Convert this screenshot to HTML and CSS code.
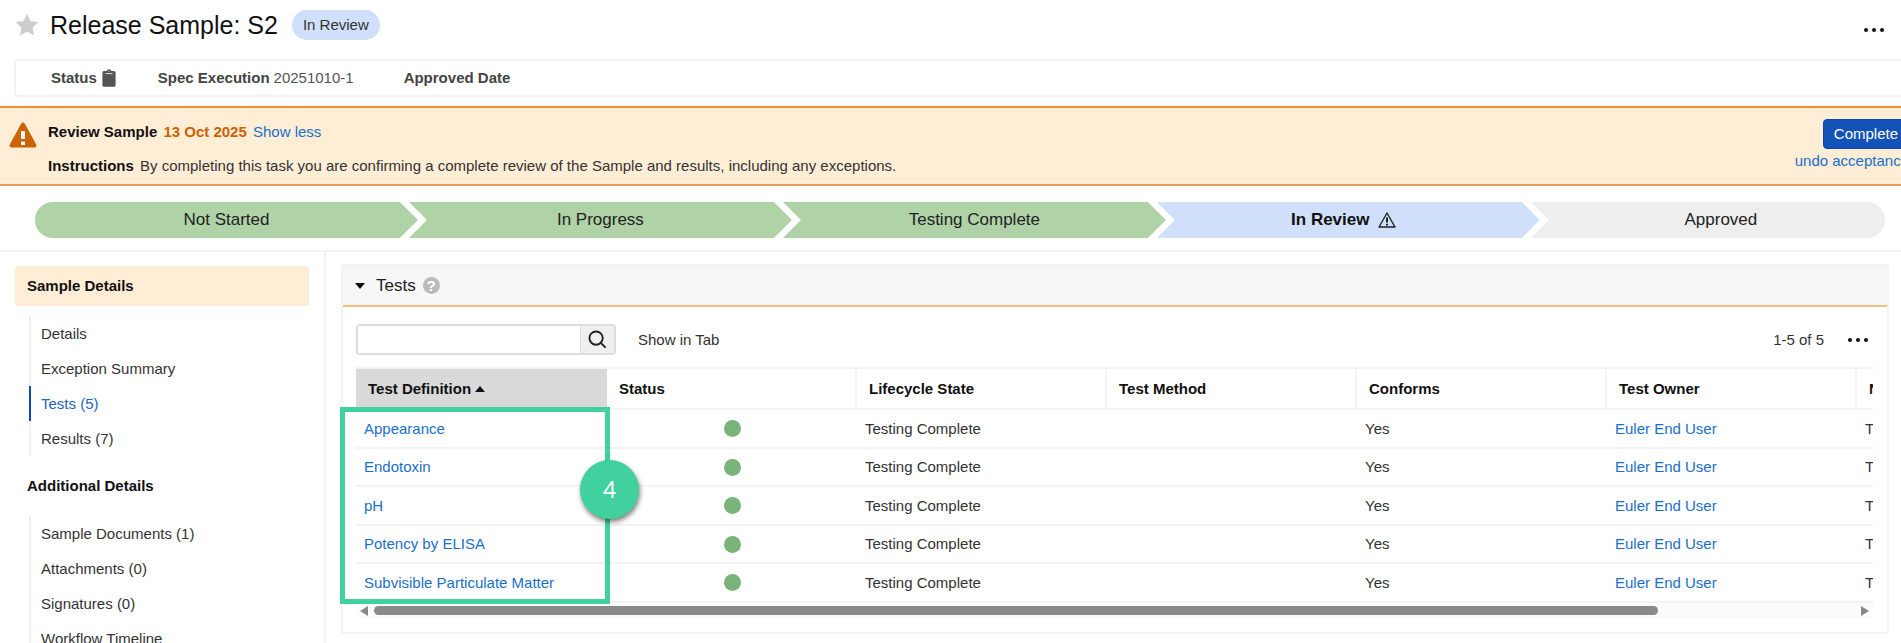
FILE: index.html
```html
<!DOCTYPE html>
<html lang="en">
	<head>
		<meta charset="utf-8">
		<title>Release Sample: S2</title>
		<link rel="stylesheet" href="styles.css">
	</head>
	<body>
		<header class="page-head">
			<svg class="star" viewBox="0 0 24 24"><path d="M12 .8l3.4 7.4 8 .9-5.900 5.500 1.600 8L12 18.600l-7.100 4 1.600-8L.6 9.100l8-.9z"/></svg>
			<h1>Release Sample: S2</h1>
			<span class="badge">In Review</span>
			<button class="more" aria-label="More actions"><i></i><i></i><i></i></button>
		</header>

		<div class="summary">
			<span class="field"><b>Status</b>
				<svg class="clip" viewBox="0 0 14 18"><path d="M2 2h2.600a2.500 2.500 0 0 1 4.800 0H12a1.600 1.600 0 0 1 1.600 1.600v12.600a1.600 1.600 0 0 1-1.600 1.600H2A1.600 1.600 0 0 1 .4 16.200V3.600A1.600 1.600 0 0 1 2 2z"/><path class="clip-bar" d="M3.400 4.600h7.200M7 1.800v.9"/></svg>
			</span>
			<span class="field"><b>Spec Execution</b> 20251010-1</span>
			<span class="field"><b>Approved Date</b></span>
		</div>

		<section class="banner">
			<svg class="warn" viewBox="0 0 28 26"><path d="M12.300 1.500a2 2 0 0 1 3.400 0l11.500 21a2 2 0 0 1-1.700 3H2.500a2 2 0 0 1-1.700-3z"/><path class="mark" d="M14 9v8M14 19.500v3.500"/></svg>
			<div class="task">
				<p><b>Review Sample</b> <b class="due">13 Oct 2025</b> <a href="#">Show less</a></p>
				<p><b>Instructions</b> <span>By completing this task you are confirming a complete review of the Sample and results, including any exceptions.</span></p>
			</div>
			<div class="task-actions">
				<button class="complete">Complete</button>
				<a href="#">undo acceptance</a>
			</div>
		</section>

		<ol class="stages">
			<li class="done">Not Started</li>
			<li class="done">In Progress</li>
			<li class="done">Testing Complete</li>
			<li class="current">In Review
				<svg class="alert" viewBox="0 0 18 16"><path d="M9 1L17 15H1z"/><path class="alert-mark" d="M9 5.500v5M9 11.700v1.800"/></svg>
			</li>
			<li>Approved</li>
		</ol>

		<div class="content">
			<nav class="side">
				<h2 class="active">Sample Details</h2>
				<ul>
					<li><a href="#">Details</a></li>
					<li><a href="#">Exception Summary</a></li>
					<li><a href="#" class="on">Tests (5)</a></li>
					<li><a href="#">Results (7)</a></li>
				</ul>
				<h2>Additional Details</h2>
				<ul>
					<li><a href="#">Sample Documents (1)</a></li>
					<li><a href="#">Attachments (0)</a></li>
					<li><a href="#">Signatures (0)</a></li>
					<li><a href="#">Workflow Timeline</a></li>
				</ul>
			</nav>

			<main>
				<section class="panel">
					<h2 class="panel-head"><span class="caret down"></span>Tests <span class="help">?</span></h2>
					<div class="panel-body">
						<div class="toolbar">
							<form class="search">
								<input type="text" aria-label="Search tests">
								<button type="button" aria-label="Search">
									<svg viewBox="0 0 20 20"><circle cx="8.500" cy="8.500" r="7"/><path d="M13.500 13.500l5 5"/></svg>
								</button>
							</form>
							<a href="#" class="tab-link">Show in Tab</a>
							<span class="count">1-5 of 5</span>
							<button class="more" aria-label="Table actions"><i></i><i></i><i></i></button>
						</div>

						<div class="grid">
							<div class="scroller">
								<table>
									<thead>
										<tr><th class="sorted">Test Definition <span class="caret up"></span></th><th>Status</th><th>Lifecycle State</th><th>Test Method</th><th>Conforms</th><th>Test Owner</th><th>Name</th></tr>
									</thead>
									<tbody>
										<tr><td><a href="#">Appearance</a></td><td><span class="dot"></span></td><td>Testing Complete</td><td></td><td>Yes</td><td><a href="#">Euler End User</a></td><td>T</td></tr>
										<tr><td><a href="#">Endotoxin</a></td><td><span class="dot"></span></td><td>Testing Complete</td><td></td><td>Yes</td><td><a href="#">Euler End User</a></td><td>T</td></tr>
										<tr><td><a href="#">pH</a></td><td><span class="dot"></span></td><td>Testing Complete</td><td></td><td>Yes</td><td><a href="#">Euler End User</a></td><td>T</td></tr>
										<tr><td><a href="#">Potency by ELISA</a></td><td><span class="dot"></span></td><td>Testing Complete</td><td></td><td>Yes</td><td><a href="#">Euler End User</a></td><td>T</td></tr>
										<tr><td><a href="#">Subvisible Particulate Matter</a></td><td><span class="dot"></span></td><td>Testing Complete</td><td></td><td>Yes</td><td><a href="#">Euler End User</a></td><td>T</td></tr>
									</tbody>
								</table>
							</div>
							<div class="scrollbar">
								<svg class="arrow" viewBox="0 0 8 10"><path d="M8 0v10L0 5z"/></svg>
								<div class="track"><div class="thumb"></div></div>
								<svg class="arrow" viewBox="0 0 8 10"><path d="M0 0v10l8-5z"/></svg>
							</div>
							<div class="callout"><span class="step">4</span></div>
						</div>
					</div>
				</section>
			</main>
		</div>
	</body>
</html>
```
FILE: styles.css
```css
*{
	box-sizing: border-box;
}
body{
	margin: 0;
	height: 100vh;
	overflow: hidden;
	background: #fff;
	color: #333;
	font: 15px/20px "Liberation Sans", Arial, sans-serif;
}
h1,h2,p,ul,ol{
	margin: 0;
	padding: 0;
}
ul,ol{
	list-style: none;
}
a{
	color: #1a6fcc;
	text-decoration: none;
}
button{
	font: inherit;
	cursor: pointer;
}

/* title row */
.page-head{
	display: flex;
	align-items: center;
	height: 59px;
	padding: 0 14px 10px 15px;
}
.star{
	width: 24px;
	height: 24px;
	margin-right: 11px;
	fill: #ccc;
}
h1{
	color: #111;
	font-size: 25px;
	font-weight: normal;
	line-height: 30px;
}
.badge{
	margin-left: 14px;
	padding: 5px 11px;
	border-radius: 15px;
	background: #d0e0fa;
}
.more{
	display: flex;
	gap: 4px;
	margin-left: auto;
	padding: 3px;
	border: 0;
	background: none;
}
.more i{
	width: 4px;
	height: 4px;
	border-radius: 50%;
	background: #111;
}
.page-head .more{
	padding-top: 13px;
}

.summary{
	display: flex;
	align-items: center;
	height: 38px;
	margin-left: 14px;
	padding-left: 35px;
	border: 2px solid #f3f3f3;
	border-right: 0;
	border-radius: 4px 0 0 4px;
	color: #555;
}
.summary b{
	color: #444;
}
.field{
	display: flex;
	align-items: center;
	gap: 4px;
	margin-right: 50px;
}
.field:first-child{
	gap: 5px;
	margin-right: 42px;
}
.clip{
	width: 14px;
	height: 18px;
	fill: #555;
}
.clip-bar{
	fill: none;
	stroke: #ddd;
}

/* task banner */
.banner{
	display: flex;
	height: 80px;
	margin-top: 9px;
	padding: 11px 0 0 9px;
	border-top: 2px solid #f0902c;
	border-bottom: 2px solid #e5a05e;
	background: #ffeed5;
}
.warn{
	width: 28px;
	height: 26px;
	margin: 3px 11px 0 0;
	fill: #cc6200;
}
.mark{
	stroke: #fff;
	stroke-width: 4;
}
.task{
	flex: 1;
	padding-top: 3px;
}
.task p{
	margin-bottom: 14px;
}
.task b{
	margin-right: 2px;
	color: #111;
}
.task .due{
	color: #cc6200;
}
.task-actions{
	display: flex;
	flex-direction: column;
	align-items: flex-end;
	gap: 2px;
	margin-right: -8px;
}
.complete{
	height: 30px;
	padding: 0 10px;
	border: 1px solid #0c47a8;
	border-radius: 4px;
	background: #1352b8;
	color: #fff;
}

/* lifecycle stages */
.stages{
	display: flex;
	margin: 16px 16px 12px 35px;
	font-size: 17px;
}
.stages li{
	display: flex;
	align-items: center;
	justify-content: center;
	gap: 9px;
	width: 20.7%;
	height: 36px;
	margin-right: -9px;
	background: #eee;
	color: #222;
	clip-path: polygon(0 0, calc(100% - 18px) 0, 100% 50%, calc(100% - 18px) 100%, 0 100%, 18px 50%);
}
.stages li:first-child{
	border-radius: 18px 0 0 18px;
	clip-path: polygon(0 0, calc(100% - 18px) 0, 100% 50%, calc(100% - 18px) 100%, 0 100%);
}
.stages li:last-child{
	flex: 1;
	margin-right: 0;
	padding-left: 26px;
	border-radius: 0 18px 18px 0;
	clip-path: polygon(0 0, 100% 0, 100% 100%, 0 100%, 18px 50%);
}
.stages .done{
	background: #b0d2a7;
}
.stages .current{
	padding-right: 9px;
	background: #d0e0fa;
	color: #111;
	font-weight: bold;
}
.alert{
	width: 18px;
	height: 16px;
	fill: none;
	stroke: #222;
	stroke-width: 1.4;
	stroke-linejoin: round;
}
.alert-mark{
	stroke-width: 2;
}

/* side navigation */
.content{
	display: flex;
	border-top: 2px solid #f3f3f3;
}
.side{
	width: 326px;
	padding: 14px 15px 0;
	border-right: 2px solid #f3f3f3;
}
.side h2{
	margin-bottom: 10px;
	padding: 10px 12px;
	border-radius: 3px;
	color: #111;
	font-size: 15px;
	line-height: 20px;
}
.side .active{
	background: #ffeed5;
}
.side ul{
	margin: 0 0 10px 14px;
}
.side li a{
	display: block;
	padding: 8px 10px 7px;
	border-left: 2px solid #eee;
	color: #333;
}
.side li .on{
	border-color: #0f4bb8;
	color: #2364c4;
}

/* tests panel */
main{
	flex: 1;
	min-width: 0;
	padding: 12px 12px 0 15px;
}
.panel{
	border: 2px solid #f3f3f3;
	border-radius: 3px;
}
.panel-head{
	display: flex;
	align-items: center;
	height: 41px;
	padding-left: 12px;
	border-bottom: 2px solid #f8bc7a;
	background: #f7f7f7;
	color: #222;
	font-size: 17px;
	font-weight: normal;
}
.caret{
	border: 5px solid transparent;
}
.down{
	margin: 6px 11px 0 0;
	border-top: 6px solid #111;
}
.help{
	width: 17px;
	height: 17px;
	margin-left: 7px;
	border-radius: 50%;
	background: #bbb;
	color: #fff;
	font-size: 15px;
	font-weight: bold;
	line-height: 17px;
	text-align: center;
}
.panel-body{
	padding: 17px 14px 14px 13px;
}
.toolbar{
	display: flex;
	align-items: center;
	margin-bottom: 12px;
}
.search{
	display: flex;
	width: 260px;
	height: 31px;
	border: 2px solid #ddd;
	border-radius: 4px;
}
.search input{
	flex: 1;
	min-width: 0;
	border: 0;
	font: inherit;
}
.search button{
	width: 34px;
	padding: 4px 7px;
	border: 0;
	border-left: 1px solid #ddd;
	background: #efefef;
}
.search svg{
	display: block;
	width: 19px;
	height: 19px;
	fill: none;
	stroke: #222;
	stroke-width: 2;
}
.tab-link{
	margin-left: 22px;
	color: #333;
}
.count{
	margin-left: auto;
}
.toolbar .more{
	margin: 0 2px 0 21px;
}

.grid{
	position: relative;
}
.scroller{
	overflow: hidden;
}
table{
	width: 1751px;
	border-collapse: separate;
	border-spacing: 0;
	border-top: 2px solid #f3f3f3;
	table-layout: fixed;
}
th{
	height: 41px;
	padding: 0 12px;
	border-right: 2px solid #f3f3f3;
	border-bottom: 2px solid #f3f3f3;
	color: #111;
	text-align: left;
}
.sorted{
	width: 251px;
	border-color: #d9d9d9;
	background: #d9d9d9;
}
.up{
	display: inline-block;
	border-top: 0;
	border-bottom: 6px solid #111;
	vertical-align: 2px;
}
td{
	height: 38px;
	padding: 0 8px;
	border-bottom: 2px solid #f3f3f3;
}
tbody tr:nth-child(odd) td{
	height: 39px;
}
.dot{
	display: block;
	width: 17px;
	height: 17px;
	margin: auto;
	border-radius: 50%;
	background: #7ab37a;
}
.scrollbar{
	display: flex;
	align-items: center;
	gap: 6px;
	height: 15px;
	padding: 0 4px;
	background: #fbfbfb;
}
.arrow{
	width: 8px;
	height: 10px;
	fill: #888;
}
.track{
	flex: 1;
}
.thumb{
	width: 86.7%;
	height: 9px;
	border-radius: 5px;
	background: #8a8a8a;
}

/* step marker over the first column */
.callout{
	position: absolute;
	top: 40px;
	left: -16px;
	width: 270px;
	height: 197px;
	border: 5px solid #40d19e;
	pointer-events: none;
}
.step{
	position: absolute;
	top: 48px;
	right: -34px;
	width: 59px;
	height: 59px;
	border-radius: 50%;
	background: #40d19e;
	box-shadow: 1px 3px 5px rgba(0,0,0,.5);
	color: #fff;
	font: 23px/59px "Noto Sans", sans-serif;
	text-align: center;
}
```
